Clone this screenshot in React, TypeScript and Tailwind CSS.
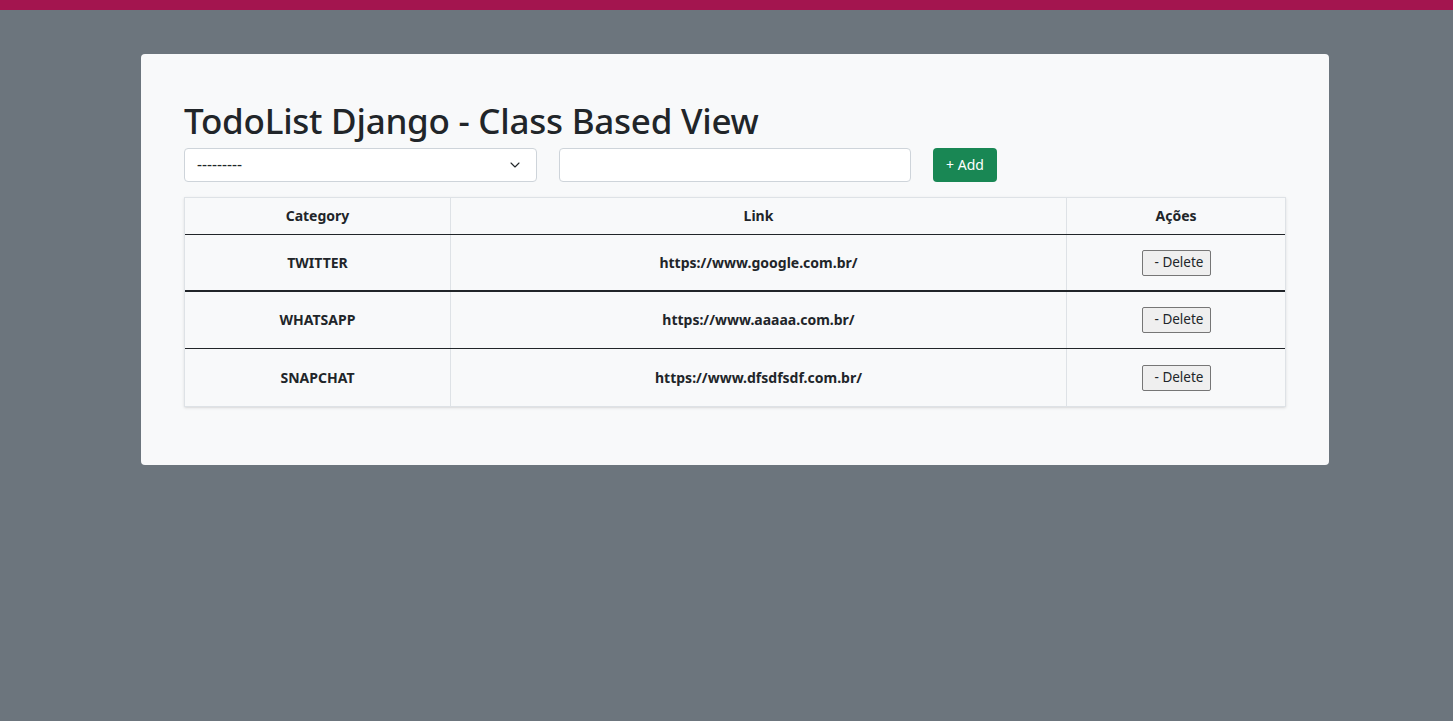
import { ChevronDown } from "lucide-react";

const rows = [
  { category: "TWITTER", link: "https://www.google.com.br/", border: "border-b-2" },
  { category: "WHATSAPP", link: "https://www.aaaaa.com.br/", border: "border-b" },
  { category: "SNAPCHAT", link: "https://www.dfsdfsdf.com.br/", border: "" },
];

export default function App() {
  return (
    <div className="min-h-[721px] bg-[#6c757d] font-['Noto_Sans',sans-serif] text-[#212529]">
      <div className="h-[10px] bg-[#a3154f]" />
      <div className="pt-[44px] pl-[141px]">
        <div className="w-[1188px] rounded bg-[#f8f9fa] px-[43px] pt-[40px] pb-[58px]">
          <h1 className="text-[35px] leading-[54px] font-medium tracking-[-0.25px]">
            TodoList Django - Class Based View
          </h1>
          <div className="flex items-center">
            <div className="flex h-[34px] w-[353px] items-center justify-between rounded border border-[#ced4da] bg-white pl-3 pr-[13px] text-[15.5px]">
              <span>---------</span>
              <ChevronDown className="h-4 w-4" strokeWidth={1.6} />
            </div>
            <div className="ml-[22px] h-[34px] w-[352px] rounded border border-[#ced4da] bg-white" />
            <button className="ml-[22px] h-[34px] w-[64px] rounded bg-[#198754] text-sm text-white">
              + Add
            </button>
          </div>
          <div className="mt-[15px] border border-[#dee2e6] shadow-sm">
            <div className="grid h-[37px] grid-cols-[266px_616px_1fr] border-b border-[#212529] text-sm font-bold">
              <div className="flex items-center justify-center border-r border-[#dee2e6]">Category</div>
              <div className="flex items-center justify-center border-r border-[#dee2e6]">Link</div>
              <div className="flex items-center justify-center">Ações</div>
            </div>
            {rows.map((r) => (
              <div
                key={r.category}
                className={`grid h-[57px] grid-cols-[266px_616px_1fr] border-[#212529] text-sm font-bold ${r.border}`}
              >
                <div className="flex items-center justify-center border-r border-[#dee2e6]">{r.category}</div>
                <div className="flex items-center justify-center border-r border-[#dee2e6]">{r.link}</div>
                <div className="flex items-center justify-center">
                  <button className="h-[26px] w-[69px] rounded-[2px] border border-[#767676] bg-[#efefef] pl-[6px] text-[13.5px] font-normal">
                    - Delete
                  </button>
                </div>
              </div>
            ))}
          </div>
        </div>
      </div>
    </div>
  );
}
